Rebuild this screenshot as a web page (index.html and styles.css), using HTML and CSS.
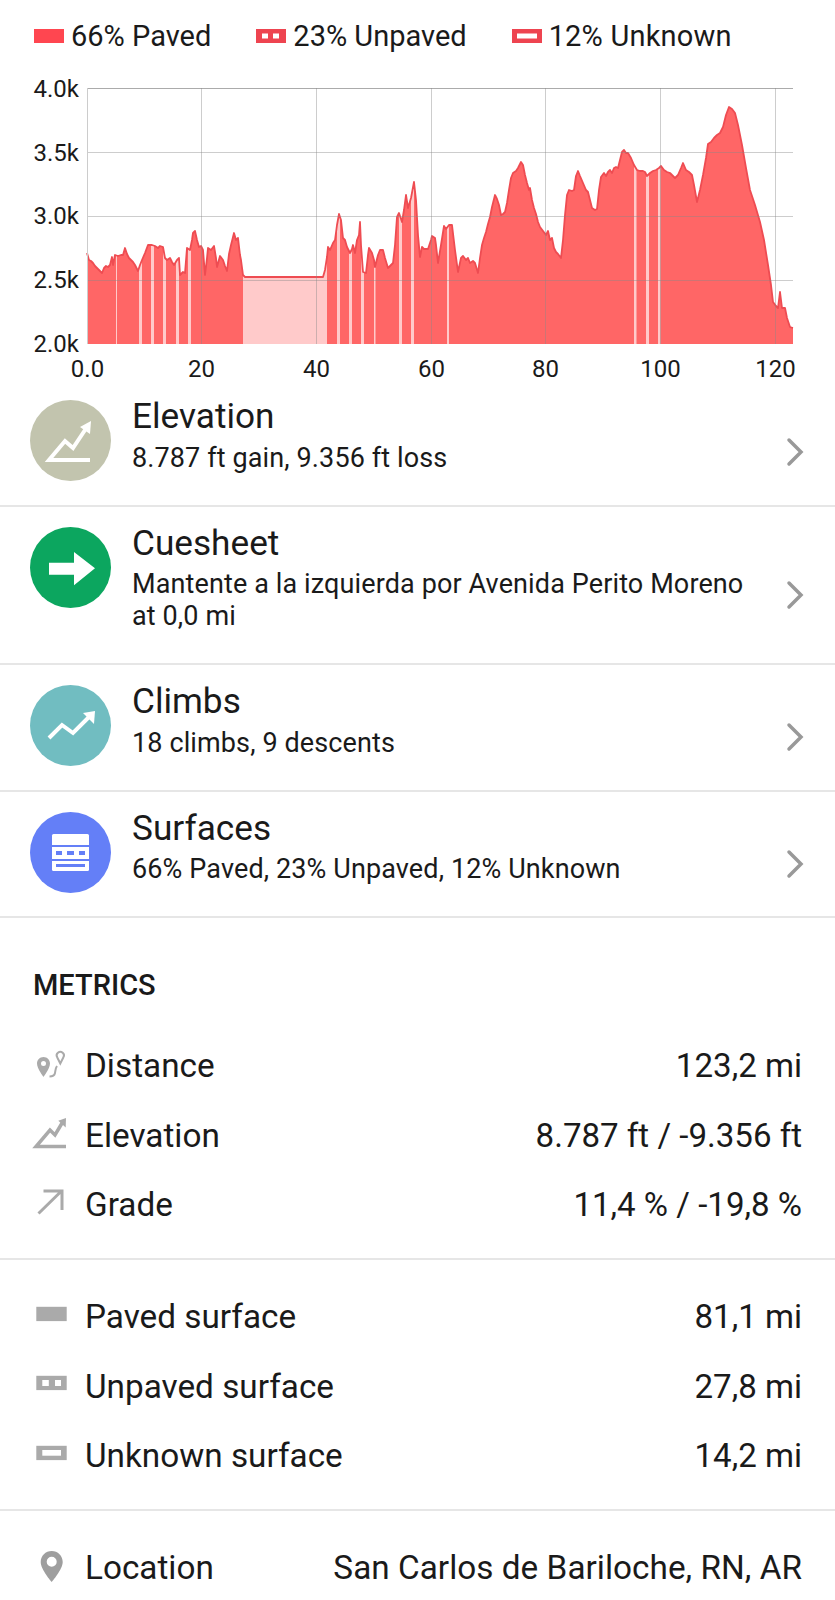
FILE: index.html
```html
<!DOCTYPE html>
<html lang="en">
<head>
<meta charset="utf-8">
<title>Route details</title>
<link rel="stylesheet" href="styles.css">
</head>
<body>
<div class="page">
  <div class="legend">
    <div class="legend-item"><svg class="swatch" viewBox="0 0 30 14"><rect width="30" height="14" fill="#ff4650"/></svg><span>66% Paved</span></div>
    <div class="legend-item"><svg class="swatch" viewBox="0 0 30 14"><rect width="30" height="14" fill="#ee4450"/><rect x="6" y="4.500" width="6" height="5" fill="#fff"/><rect x="17" y="4.500" width="6" height="5" fill="#fff"/></svg><span>23% Unpaved</span></div>
    <div class="legend-item"><svg class="swatch" viewBox="0 0 30 14"><rect width="30" height="14" fill="#ee4450"/><rect x="5" y="4.500" width="20" height="5" fill="#fff"/></svg><span class="legend-wide">12% Unknown</span></div>
  </div>

  <svg class="chart" viewBox="0 66 835 318">
    <defs>
      <polygon id="profile" points="87,344 87,253 89,260 91,261 93,263 95,266 97,268 100,271 102,273 104,268 106,266 108,267 110,265 112,257 113,265 115,255 118,256 121,255 123,255 125,248 127,254 129,258 131,260 133,262 135,265 138,271 140,265 142,260 145,253 148,245 152,245 155,246 158,248 160,246 163,247 165,258 167,260 170,258 172,262 174,265 177,260 179,258 180,275 183,272 185,273 187,248 190,250 192,240 193,233 195,231 197,240 199,247 201,246 203,250 205,275 207,258 208,248 211,250 214,246 216,258 217,267 220,256 223,260 225,266 227,271 229,254 231,245 234,233 236,240 238,238 240,255 241,260 243,275 245,277 247,277 323,277 325,270 327,257 328,247 330,250 333,243 335,240 337,225 339,214 341,220 343,238 345,240 347,247 350,253 352,249 353,245 355,253 357,240 359,235 360,222 361,245 363,272 366,273 368,255 369,248 372,253 374,260 375,267 378,255 380,250 383,250 385,258 388,268 390,266 393,263 395,245 397,217 399,213 402,222 404,210 406,195 408,208 411,198 414,182 416,200 418,235 420,257 422,247 424,249 428,249 431,240 432,236 435,238 436,245 438,263 441,245 444,226 446,229 449,225 452,225 455,250 458,272 461,258 463,256 466,260 468,258 470,263 473,261 475,263 478,273 480,258 482,245 484,238 486,232 488,224 490,217 492,207 495,195 497,199 499,205 501,215 503,214 505,212 507,203 509,190 511,178 513,173 516,171 518,168 521,162 523,165 525,175 527,183 529,190 530,188 532,200 534,208 536,214 538,222 540,227 543,231 546,235 548,231 550,240 552,238 554,248 556,252 558,254 561,258 563,240 565,215 567,195 569,190 572,191 574,190 576,176 578,171 580,176 583,183 586,190 588,192 590,200 592,208 595,210 597,209 599,190 601,177 604,173 606,176 608,172 610,170 612,173 614,168 616,167 618,168 620,160 622,152 624,150 626,153 628,153 631,158 634,165 637,170 640,171 643,171 645,172 647,176 650,173 653,171 656,170 659,168 661,166 664,170 667,172 670,173 673,176 675,178 678,175 681,168 683,163 686,170 689,172 692,175 694,185 697,202 700,190 703,175 706,158 708,144 711,142 714,138 717,135 720,133 723,127 726,115 729,107 732,109 735,113 738,125 742,145 746,168 750,190 755,205 760,222 764,240 768,265 771,285 773,302 776,306 778,308 780,292 782,308 785,308 787,318 790,327 793,328 793,344"/>
      <clipPath id="profile-clip"><use href="#profile"/></clipPath>
    </defs>
    <use class="area" href="#profile"/>
    <g class="stripes" clip-path="url(#profile-clip)">
      <rect x="116" y="80" width="1" height="264"/>
      <rect x="139" y="80" width="3" height="264"/>
      <rect x="151" y="80" width="3" height="264"/>
      <rect x="163" y="80" width="3" height="264"/>
      <rect x="176" y="80" width="3" height="264"/>
      <rect x="188" y="80" width="3" height="264"/>
      <rect x="243" y="80" width="84" height="264"/>
      <rect x="337" y="80" width="3" height="264"/>
      <rect x="349" y="80" width="3" height="264"/>
      <rect x="361" y="80" width="3" height="264"/>
      <rect x="374" y="80" width="1.500" height="264"/>
      <rect x="399" y="80" width="3" height="264"/>
      <rect x="411" y="80" width="3" height="264"/>
      <rect x="447" y="80" width="2" height="264"/>
      <rect x="634" y="80" width="2.500" height="264"/>
      <rect x="646" y="80" width="3" height="264"/>
      <rect x="658" y="80" width="2.500" height="264"/>
    </g>
    <polyline class="line" points="87,253 89,260 91,261 93,263 95,266 97,268 100,271 102,273 104,268 106,266 108,267 110,265 112,257 113,265 115,255 118,256 121,255 123,255 125,248 127,254 129,258 131,260 133,262 135,265 138,271 140,265 142,260 145,253 148,245 152,245 155,246 158,248 160,246 163,247 165,258 167,260 170,258 172,262 174,265 177,260 179,258 180,275 183,272 185,273 187,248 190,250 192,240 193,233 195,231 197,240 199,247 201,246 203,250 205,275 207,258 208,248 211,250 214,246 216,258 217,267 220,256 223,260 225,266 227,271 229,254 231,245 234,233 236,240 238,238 240,255 241,260 243,275 245,277 247,277 323,277 325,270 327,257 328,247 330,250 333,243 335,240 337,225 339,214 341,220 343,238 345,240 347,247 350,253 352,249 353,245 355,253 357,240 359,235 360,222 361,245 363,272 366,273 368,255 369,248 372,253 374,260 375,267 378,255 380,250 383,250 385,258 388,268 390,266 393,263 395,245 397,217 399,213 402,222 404,210 406,195 408,208 411,198 414,182 416,200 418,235 420,257 422,247 424,249 428,249 431,240 432,236 435,238 436,245 438,263 441,245 444,226 446,229 449,225 452,225 455,250 458,272 461,258 463,256 466,260 468,258 470,263 473,261 475,263 478,273 480,258 482,245 484,238 486,232 488,224 490,217 492,207 495,195 497,199 499,205 501,215 503,214 505,212 507,203 509,190 511,178 513,173 516,171 518,168 521,162 523,165 525,175 527,183 529,190 530,188 532,200 534,208 536,214 538,222 540,227 543,231 546,235 548,231 550,240 552,238 554,248 556,252 558,254 561,258 563,240 565,215 567,195 569,190 572,191 574,190 576,176 578,171 580,176 583,183 586,190 588,192 590,200 592,208 595,210 597,209 599,190 601,177 604,173 606,176 608,172 610,170 612,173 614,168 616,167 618,168 620,160 622,152 624,150 626,153 628,153 631,158 634,165 637,170 640,171 643,171 645,172 647,176 650,173 653,171 656,170 659,168 661,166 664,170 667,172 670,173 673,176 675,178 678,175 681,168 683,163 686,170 689,172 692,175 694,185 697,202 700,190 703,175 706,158 708,144 711,142 714,138 717,135 720,133 723,127 726,115 729,107 732,109 735,113 738,125 742,145 746,168 750,190 755,205 760,222 764,240 768,265 771,285 773,302 776,306 778,308 780,292 782,308 785,308 787,318 790,327 793,328"/>
    <g class="grid">
      <line class="grid-top" x1="87" y1="88.500" x2="793" y2="88.500"/>
      <line x1="87" y1="152.500" x2="793" y2="152.500"/>
      <line x1="87" y1="216.500" x2="793" y2="216.500"/>
      <line x1="87" y1="280.500" x2="793" y2="280.500"/>
      <line x1="201.500" y1="88" x2="201.500" y2="344"/>
      <line x1="316.500" y1="88" x2="316.500" y2="344"/>
      <line x1="431.500" y1="88" x2="431.500" y2="344"/>
      <line x1="545.500" y1="88" x2="545.500" y2="344"/>
      <line x1="660.500" y1="88" x2="660.500" y2="344"/>
      <line x1="775.500" y1="88" x2="775.500" y2="344"/>
    </g>
    <line class="axis" x1="87.500" y1="88" x2="87.500" y2="344"/>
    <g class="tick-y">
      <text x="79" y="97">4.0k</text>
      <text x="79" y="161">3.5k</text>
      <text x="79" y="224">3.0k</text>
      <text x="79" y="288">2.5k</text>
      <text x="79" y="352">2.0k</text>
    </g>
    <g class="tick-x">
      <text x="87.500" y="377">0.0</text>
      <text x="201.500" y="377">20</text>
      <text x="316.500" y="377">40</text>
      <text x="431.500" y="377">60</text>
      <text x="545.500" y="377">80</text>
      <text x="660.500" y="377">100</text>
      <text x="775.500" y="377">120</text>
    </g>
  </svg>

  <div class="card card-first">
    <svg class="badge" viewBox="0 0 81 81"><circle cx="40.500" cy="40.500" r="40.500" fill="#c2c4ae"/><path class="glyph" d="M60 60H19L35 41l8 7 14-21"/><path fill="#fff" d="M61 21l-1 13-10-7z"/></svg>
    <div class="card-text">
      <div class="card-title">Elevation</div>
      <div class="card-sub">8.787 ft gain, 9.356 ft loss</div>
    </div>
    <svg class="chevron" viewBox="0 0 18 30"><path d="M3 3l12 12L3 27"/></svg>
  </div>
  <div class="card">
    <svg class="badge" viewBox="0 0 81 81"><circle cx="40.500" cy="40.500" r="40.500" fill="#0ca65f"/><path fill="#fff" d="M19 35.700h25V25l21 16.300-21 17V47.700H19z"/></svg>
    <div class="card-text">
      <div class="card-title">Cuesheet</div>
      <div class="card-sub">Mantente a la izquierda por Avenida Perito Moreno<br>at 0,0 mi</div>
    </div>
    <svg class="chevron" viewBox="0 0 18 30"><path d="M3 3l12 12L3 27"/></svg>
  </div>
  <div class="card">
    <svg class="badge" viewBox="0 0 81 81"><circle cx="40.500" cy="40.500" r="40.500" fill="#71bdc1"/><path class="glyph" d="M19 53l13-13 11 8 18-18"/><path fill="#fff" d="M65 26l-12 2 11 11z"/></svg>
    <div class="card-text">
      <div class="card-title">Climbs</div>
      <div class="card-sub">18 climbs, 9 descents</div>
    </div>
    <svg class="chevron" viewBox="0 0 18 30"><path d="M3 3l12 12L3 27"/></svg>
  </div>
  <div class="card">
    <svg class="badge" viewBox="0 0 81 81"><circle cx="40.500" cy="40.500" r="40.500" fill="#647ff7"/><rect x="22" y="22" width="37" height="37" rx="1.500" fill="#fff"/><g fill="#647ff7"><rect x="22" y="33" width="37" height="2"/><rect x="26" y="39" width="6" height="4"/><rect x="37" y="39" width="7" height="4"/><rect x="49" y="39" width="6" height="4"/><rect x="22" y="47" width="37" height="2"/><rect x="26" y="52" width="29" height="3"/></g></svg>
    <div class="card-text">
      <div class="card-title">Surfaces</div>
      <div class="card-sub">66% Paved, 23% Unpaved, 12% Unknown</div>
    </div>
    <svg class="chevron" viewBox="0 0 18 30"><path d="M3 3l12 12L3 27"/></svg>
  </div>

  <div class="section-title">METRICS</div>
  <div class="metrics">
    <div class="metric"><svg class="metric-icon" viewBox="0 0 36 34"><path class="icon-fill" fill-rule="evenodd" d="M10.500 8C6.900 8 4 10.900 4 14.500 4 19.300 10.500 28 10.500 28S17 19.300 17 14.500C17 10.900 14.100 8 10.500 8zm0 4a2.500 2.500 0 110 5 2.500 2.500 0 010-5z"/><path class="icon-stroke" d="M16.500 27.500c3 0 5-1 5.500-3.500s.5-5 2-7"/><path class="icon-stroke" d="M27.300 14.500l-3-6a3.600 3.600 0 116 0z"/></svg><span class="metric-label">Distance</span><span class="metric-value">123,2 mi</span></div>
    <div class="metric"><svg class="metric-icon" viewBox="0 0 36 34"><path class="icon-thick" d="M33 28.500H3L17 12l5 5 8-13.500"/><path class="icon-fill" d="M33 0l-.3 9.500-7.400-6.700z"/></svg><span class="metric-label">Elevation</span><span class="metric-value">8.787 ft / -9.356 ft</span></div>
    <div class="metric"><svg class="metric-icon" viewBox="0 0 36 34"><path class="icon-stroke-w" d="M5.500 25.500L28.500 3M10.500 3H29v19"/></svg><span class="metric-label">Grade</span><span class="metric-value">11,4 % / -19,8 %</span></div>
  </div>
  <div class="metrics metrics-ruled">
    <div class="metric"><svg class="metric-icon" viewBox="0 0 36 34"><rect x="3.300" y="6.800" width="30.400" height="14.300" fill="#aaa"/></svg><span class="metric-label">Paved surface</span><span class="metric-value">81,1 mi</span></div>
    <div class="metric"><svg class="metric-icon" viewBox="0 0 36 34"><rect x="3.300" y="6.800" width="30.400" height="14.300" fill="#aaa"/><rect x="9.300" y="11" width="6.500" height="6" fill="#fff"/><rect x="22" y="11" width="6" height="6" fill="#fff"/></svg><span class="metric-label">Unpaved surface</span><span class="metric-value">27,8 mi</span></div>
    <div class="metric"><svg class="metric-icon" viewBox="0 0 36 34"><rect x="3.300" y="6.800" width="30.400" height="14.300" fill="#aaa"/><rect x="9.300" y="11" width="18.700" height="5.700" fill="#fff"/></svg><span class="metric-label">Unknown surface</span><span class="metric-value">14,2 mi</span></div>
  </div>
  <div class="metrics metrics-ruled">
    <div class="metric"><svg class="metric-icon" viewBox="0 0 36 34"><path class="icon-pin" fill-rule="evenodd" d="M18.700 0C12.600 0 7.700 4.900 7.700 11 7.700 18.500 18.700 31 18.700 31S29.700 18.500 29.700 11C29.700 4.900 24.800 0 18.700 0zm0 5.700a5 5 0 110 10 5 5 0 010-10z"/></svg><span class="metric-label">Location</span><span class="metric-value metric-value-long">San Carlos de Bariloche, RN, AR</span></div>
  </div>
</div>
</body>
</html>
```
FILE: styles.css
```css
html, body { margin: 0; background: #fff; }
body { font-family: Roboto, sans-serif; color: #1a1a1a; }
.page { width: 835px; height: 1600px; overflow: hidden; }

.legend { display: flex; height: 66px; padding: 16px 0 0 34px; box-sizing: border-box; gap: 45px; }
.legend-item { display: flex; align-items: center; gap: 7px; height: 40px; font-size: 29px; }
.legend-wide { letter-spacing: .2px; }
.swatch { width: 30px; height: 14px; flex: none; margin-top: -1px; }

.chart { display: block; width: 835px; height: 318px; }
.area { fill: #ff6666; }
.stripes rect { fill: #ffcaca; }
.line { fill: none; stroke: #ee4c52; stroke-width: 1.800; stroke-linejoin: round; }
.grid line { stroke: #888; stroke-opacity: .42; stroke-width: 1; }
.grid .grid-top { stroke-opacity: .7; }
.axis { stroke: #ccc; stroke-width: 1; }
.tick-y text, .tick-x text { font-size: 24px; fill: #1a1a1a; }
.tick-y text { text-anchor: end; }
.tick-x text { text-anchor: middle; }

.card { display: flex; align-items: flex-start; padding: 20px 31px 0 30px; border-bottom: 2px solid #e6e6e6; }
.card-first { padding-top: 16px; }
.badge { width: 81px; height: 81px; flex: none; margin-right: 21px; }
.glyph { fill: none; stroke: #fff; stroke-width: 4; }
.card-text { flex: 1; margin-top: -5px; padding-bottom: 31px; }
.card-title { font-size: 35.200px; line-height: 42px; }
.card-sub { font-size: 27px; line-height: 32px; letter-spacing: .12px; margin-top: 4.500px; }
.chevron { width: 18px; height: 30px; flex: none; align-self: center; }
.chevron path { fill: none; stroke: #999; stroke-width: 3.500; stroke-linecap: round; }

.section-title { font-size: 29px; font-weight: 500; padding: 47px 33px 0; line-height: 40px; }
.metrics { padding: 26px 33px 18px; }
.metrics-ruled { border-top: 2px solid #e6e6e6; padding-top: 22.500px; }
.metric { display: flex; align-items: center; height: 69.500px; font-size: 33.300px; }
.metric-icon { width: 36px; height: 34px; flex: none; margin-right: 16px; overflow: visible; }
.metric-label { flex: 1; }
.metric-value { font-size: 33.100px; }
.metric-value-long { font-size: 33.300px; letter-spacing: .03px; }
.icon-fill { fill: #aaa; }
.icon-pin { fill: #9e9e9e; }
.icon-stroke { fill: none; stroke: #aaa; stroke-width: 2; }
.icon-stroke-w { fill: none; stroke: #aaa; stroke-width: 3; }
.icon-thick { fill: none; stroke: #aaa; stroke-width: 3.500; }
```
